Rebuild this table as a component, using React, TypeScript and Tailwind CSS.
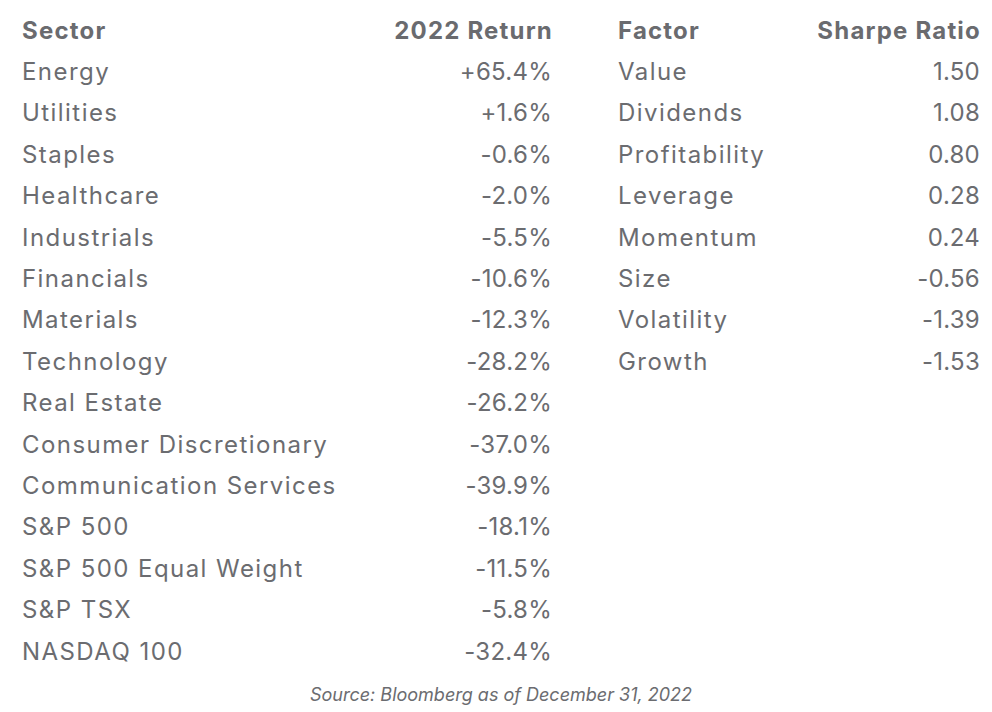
const sectors: [string, string][] = [
  ["Energy", "+65.4%"],
  ["Utilities", "+1.6%"],
  ["Staples", "-0.6%"],
  ["Healthcare", "-2.0%"],
  ["Industrials", "-5.5%"],
  ["Financials", "-10.6%"],
  ["Materials", "-12.3%"],
  ["Technology", "-28.2%"],
  ["Real Estate", "-26.2%"],
  ["Consumer Discretionary", "-37.0%"],
  ["Communication Services", "-39.9%"],
  ["S&P 500", "-18.1%"],
  ["S&P 500 Equal Weight", "-11.5%"],
  ["S&P TSX", "-5.8%"],
  ["NASDAQ 100", "-32.4%"],
];

const factors: [string, string][] = [
  ["Value", "1.50"],
  ["Dividends", "1.08"],
  ["Profitability", "0.80"],
  ["Leverage", "0.28"],
  ["Momentum", "0.24"],
  ["Size", "-0.56"],
  ["Volatility", "-1.39"],
  ["Growth", "-1.53"],
];

function Table({ head, rows, width }: { head: [string, string]; rows: [string, string][]; width: string }) {
  return (
    <div className={`flex flex-col ${width}`}>
      <div className="flex justify-between items-center h-[41.4px] font-bold tracking-[0.05em] text-[#6a6b6f]">
        <span>{head[0]}</span>
        <span className="-mr-[1px]">{head[1]}</span>
      </div>
      {rows.map(([label, value]) => (
        <div key={label} className="flex justify-between items-center h-[41.4px]">
          <span className="tracking-[0.06em]">{label}</span>
          <span className="tracking-[0.01em]">{value}</span>
        </div>
      ))}
    </div>
  );
}

export default function App() {
  return (
    <div
      className="w-[992px] h-[712px] bg-white text-[#6b6c70] text-[24px] overflow-hidden"
      style={{ fontFamily: "Inter, 'Liberation Sans', sans-serif" }}
    >
      <div className="pl-[22px] pt-[10px] w-[980px]">
        <div className="flex gap-[66px] items-start">
          <Table head={["Sector", "2022 Return"]} rows={sectors} width="w-[530px]" />
          <Table head={["Factor", "Sharpe Ratio"]} rows={factors} width="w-[362px]" />
        </div>
        <p className="text-center italic text-[18px] leading-[42px] pt-[2px] text-[#6b6c70]">
          Source: Bloomberg as of December 31, 2022
        </p>
      </div>
    </div>
  );
}
